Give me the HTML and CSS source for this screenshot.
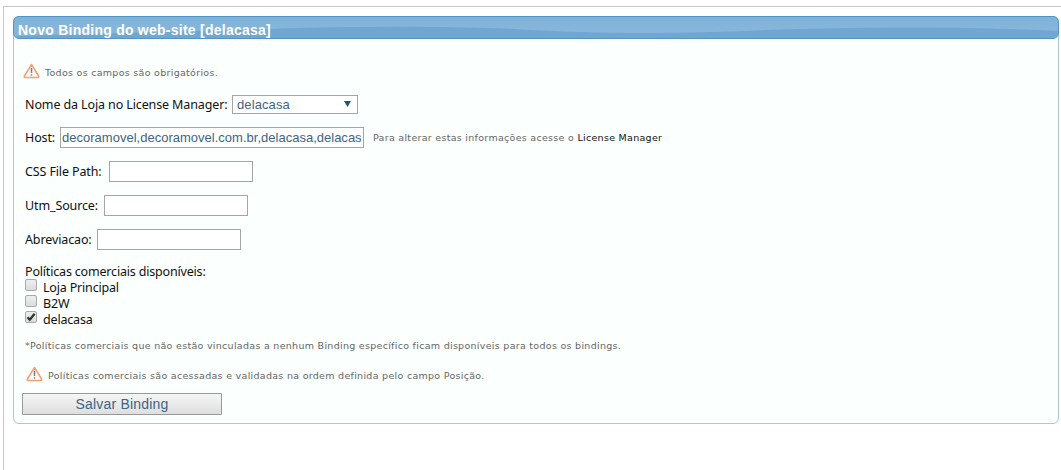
FILE: index.html
```html
<!DOCTYPE html>
<html lang="pt-BR">
<head>
<meta charset="utf-8">
<title>Novo Binding</title>
<link rel="stylesheet" href="styles.css">
</head>
<body>
<main class="frame">
  <form class="panel">
    <h1 class="panel-title">
      <svg class="shine" viewBox="0 0 1044 21" preserveAspectRatio="none"><path d="M0 21V19Q130 15 250 12C340 9 430 9 500 12C570 16 620 17 700 15C800 11 920 8 1044 14V21Z" fill="#6fa7d1"/></svg>
      <span class="title-text">Novo Binding do web-site [delacasa]</span>
    </h1>
    <div class="content">
      <p class="warning first">
        <svg class="warn-icon" viewBox="0 0 17 16"><path d="M8.5 1.5L15.6 13Q16.2 14.5 14.8 14.5H2.2Q.8 14.5 1.4 13Z" fill="#fffaf5" stroke="#f5a070" stroke-width="1.5" stroke-linejoin="round"/><path d="M8.5 5V10M8.5 11.2V12.7" stroke="#5c88ad" stroke-width="1.5"/></svg>
        <span>Todos os campos são obrigatórios.</span>
      </p>
      <div class="row select-row"><label class="l-name">Nome da Loja no License Manager:</label><div class="select"><span>delacasa</span><svg class="arrow" viewBox="0 0 7 6"><path d="M0 0H7L3.5 6Z" fill="#245276"/></svg></div></div>
      <div class="row"><label class="l-host">Host:</label><div class="field host"><span>decoramovel,decoramovel.com.br,delacasa,delacas</span></div><span class="hint">Para alterar estas informações acesse o <a class="link">License Manager</a></span></div>
      <div class="row"><label class="l-css">CSS File Path:</label><div class="field"></div></div>
      <div class="row"><label class="l-utm">Utm_Source:</label><div class="field"></div></div>
      <div class="row"><label class="l-abr">Abreviacao:</label><div class="field"></div></div>
      <div class="policies">
        <div class="line"><span>Políticas comerciais disponíveis:</span></div>
        <div class="line"><i class="check"></i><span>Loja Principal</span></div>
        <div class="line"><i class="check"></i><span>B2W</span></div>
        <div class="line"><i class="check"><svg class="tick" viewBox="0 0 10 10"><path d="M1.5 5.2L3.8 7.8L8.6 1.8" fill="none" stroke="#333" stroke-width="2.2"/></svg></i><span>delacasa</span></div>
      </div>
      <p class="note"><span>*Políticas comerciais que não estão vinculadas a nenhum Binding específico ficam disponíveis para todos os bindings.</span></p>
      <p class="warning second">
        <svg class="warn-icon" viewBox="0 0 17 16"><path d="M8.5 1.5L15.6 13Q16.2 14.5 14.8 14.5H2.2Q.8 14.5 1.4 13Z" fill="#fffaf5" stroke="#f5a070" stroke-width="1.5" stroke-linejoin="round"/><path d="M8.5 5V10M8.5 11.2V12.7" stroke="#5c88ad" stroke-width="1.5"/></svg>
        <span>Políticas comerciais são acessadas e validadas na ordem definida pelo campo Posição.</span>
      </p>
      <button class="save" type="button">Salvar Binding</button>
    </div>
  </form>
</main>
</body>
</html>
```

FILE: styles.css
```css
* { box-sizing: border-box; }
body { margin: 0; background: #fff; }
.frame { margin: 6px 0 0 3px; height: 464px; border-top: 1px solid #c6c6c6; border-left: 1px solid #c6c6c6; padding: 9px 2px 0 9px; }
.panel { height: 408px; border: 1px solid #a9c7d5; border-radius: 6px; background: #fbfffe; }
.panel-title { position: relative; overflow: hidden; margin: -1px -1px 0; height: 23px; border: 1px solid #5295c5; border-radius: 6px; background: linear-gradient(#7fb3da, #8ab7dc); }
.shine { position: absolute; left: 0; top: 0; width: 100%; height: 100%; }
.title-text { position: absolute; left: 4px; top: 5px; font: bold 14px/16px "Liberation Sans", Arial, sans-serif; letter-spacing: .25px; color: #fff; white-space: nowrap; }
.content { padding: 24px 0 0 11px; font: 12.5px/16px "Noto Sans", Tahoma, sans-serif; color: #111; white-space: nowrap; }
.warning, .note, .hint { margin: 0; font: 9.5px/16px "DejaVu Sans", Verdana, sans-serif; letter-spacing: .29px; color: #666; }
.warning { display: flex; align-items: center; height: 16px; }
.warning span { position: relative; top: 2px; }
.first { margin-left: -2px; }
.second { margin: 12px 0 0 1px; }
.warn-icon { width: 17px; height: 16px; margin-right: 5px; flex: none; }
.row { display: flex; align-items: center; height: 21px; margin: 13px 0 0; }
.select-row { height: 19px; margin-top: 16px; }
.row label { flex: none; letter-spacing: -.12px; }
.l-name { width: 207px; }
.l-host { width: 35px; }
.l-css { width: 84px; }
.l-utm { width: 79px; }
.l-abr { width: 72px; }
.select { display: flex; align-items: center; justify-content: space-between; width: 126px; height: 19px; padding: 0 6px 0 4px; border: 1px solid #a5a5a5; background: #fff; color: #3d6486; font: 13px/17px "Liberation Sans", Arial, sans-serif; letter-spacing: .1px; }
.arrow { width: 7px; height: 6px; margin-bottom: 2px; }
.field { width: 144px; height: 21px; border: 1px solid #a5a5a5; background: #fff; color: #3d6486; font: 13px/19px "Liberation Sans", Arial, sans-serif; overflow: hidden; }
.host { width: 304px; padding-left: 1px; letter-spacing: .01px; }
.hint { margin-left: 9px; padding-top: 1px; }
.link { color: #111; }
.policies { margin-top: 13px; letter-spacing: -.18px; }
.line { display: flex; height: 16px; }
.line span { padding-top: 1px; }
.check { width: 12px; height: 12px; margin: 0 6px 0 0; border: 1px solid #aaa; border-radius: 2px; background: linear-gradient(#eee, #dcdcdc); }
.tick { display: block; width: 10px; height: 10px; }
.note { margin-top: 11px; }
.save { display: block; width: 200px; height: 22px; margin: 11px 0 0 -3px; padding: 0; border: 1px solid #999; border-radius: 1px; background: linear-gradient(#f6f6f6, #dedede); color: #3d6486; font: 14px/20px "Liberation Sans", Arial, sans-serif; letter-spacing: .2px; }
```
